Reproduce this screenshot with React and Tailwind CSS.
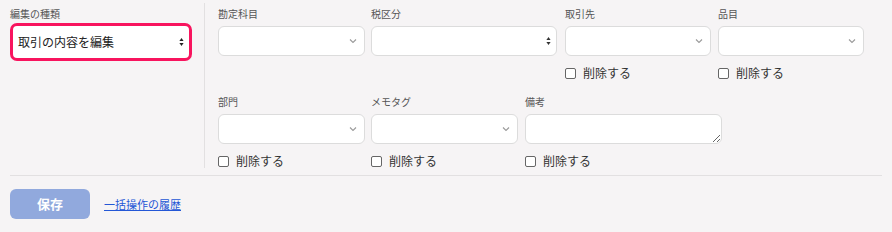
import { useState } from "react";

const font = { fontFamily: '"Noto Sans CJK JP", "Noto Sans", sans-serif' };

function Chevron() {
  return (
    <svg width="8" height="5" viewBox="0 0 8 5" className="absolute right-[7px] top-1/2 -translate-y-1/2">
      <path d="M1 1l3 3 3-3" fill="none" stroke="#9a9a9a" strokeWidth="1.1" />
    </svg>
  );
}

function UpDown({ color = "#333" }) {
  return (
    <svg width="5" height="9" viewBox="0 0 5 9" className="absolute right-[5px] top-1/2 -translate-y-1/2">
      <path d="M2.5 0.5L4.6 3.6H0.4z" fill={color} />
      <path d="M2.5 8.5L4.6 5.4H0.4z" fill={color} />
    </svg>
  );
}

function Box({ width, kind = "chevron" }) {
  return (
    <div
      className="relative h-[30px] rounded-[6px] border border-[#dcdcdc] bg-white"
      style={{ width }}
    >
      {kind === "chevron" ? <Chevron /> : <UpDown />}
    </div>
  );
}

function Check() {
  const [on, setOn] = useState(false);
  return (
    <label className="mt-[10px] flex h-[14px] items-center gap-[7px] text-[12px] text-[#333]">
      <span
        onClick={() => setOn(!on)}
        className={`block h-[11px] w-[11px] rounded-[2px] border border-[#666] ${on ? "bg-[#2b5bd7]" : "bg-white"}`}
      ></span>
      <span className="leading-none">削除する</span>
    </label>
  );
}

function Field({ label, width, kind, check, textarea }) {
  return (
    <div className="flex flex-col" style={{ width }}>
      <div className="mb-[6px] h-[12px] text-[10px] leading-[12px] text-[#555]">{label}</div>
      {textarea ? (
        <textarea className="h-[30px] resize rounded-[6px] border border-[#dcdcdc] bg-white outline-none" style={{ width }}></textarea>
      ) : (
        <Box width={width} kind={kind} />
      )}
      {check ? <Check /> : <div className="mt-[10px] h-[14px]"></div>}
    </div>
  );
}

export default function App() {
  return (
    <div className="h-[232px] w-[892px] bg-[#f6f4f5] px-[10px]" style={font}>
      <div className="flex border-b border-[#e2e0e1]">
        <div className="w-[182px] pt-[8px]">
          <div className="mb-[3px] h-[12px] text-[10px] leading-[12px] text-[#555]">編集の種類</div>
          <div className="relative flex h-[38px] items-center rounded-[7px] border-[3px] border-[#f8145e] bg-white pl-[5px] text-[12px] text-[#222]">
            取引の内容を編集
            <UpDown color="#222" />
          </div>
        </div>
        <div className="ml-[12px] mt-[3px] h-[165px] w-px bg-[#e2e0e1]"></div>
        <div className="ml-[13px] flex flex-col gap-[16px] pt-[8px] pb-[7px]">
          <div className="flex">
            <Field label="勘定科目" width={147} />
            <div className="w-[6px]"></div>
            <Field label="税区分" width={186} kind="updown" />
            <div className="w-[8px]"></div>
            <Field label="取引先" width={146} check />
            <div className="w-[7px]"></div>
            <Field label="品目" width={146} check />
          </div>
          <div className="flex">
            <Field label="部門" width={147} check />
            <div className="w-[6px]"></div>
            <Field label="メモタグ" width={147} check />
            <div className="w-[7px]"></div>
            <Field label="備考" width={197} check textarea />
          </div>
        </div>
      </div>
      <div className="mt-[13px] flex items-center gap-[14px]">
        <button className="h-[30px] w-[80px] rounded-[6px] bg-[#91a9dd] text-[13px] font-bold text-white">保存</button>
        <a href="#" className="text-[11px] text-[#2457d6] underline">一括操作の履歴</a>
      </div>
    </div>
  );
}
